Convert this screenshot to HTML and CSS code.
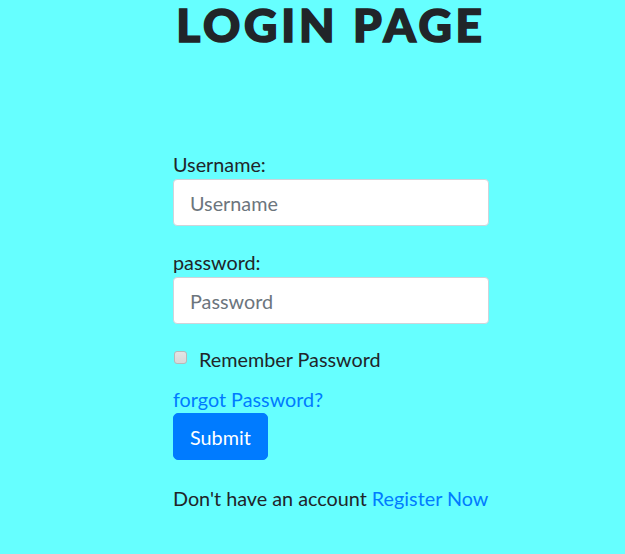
FILE: index.html
```html
<!DOCTYPE html>
<html>
<head>
<meta charset="utf-8">
<link rel="stylesheet" href="styles.css">
</head>
<body>
<div class="page">
  <h1 class="title">LOGIN PAGE</h1>
  <form class="login">
    <div class="group">
      <label class="label">Username:</label>
      <input class="field" type="text" placeholder="Username">
    </div>
    <div class="group">
      <label class="label">password:</label>
      <input class="field" type="password" placeholder="Password">
    </div>
    <div class="check">
      <input type="checkbox" class="box">
      <span>Remember Password</span>
    </div>
    <a class="link forgot" href="#">forgot Password?</a>
    <button class="submit" type="button">Submit</button>
    <p class="register">Don't have an account <a class="link" href="#">Register Now</a></p>
  </form>
</div>
</body>
</html>
```
FILE: styles.css
```css
html, body { margin: 0; padding: 0; }
body {
  background: #66ffff;
  font-family: Lato, "Open Sans", sans-serif;
  font-size: 19.8px;
  color: #212529;
  line-height: 30px;
}
.page {
  display: flex;
  flex-direction: column;
  align-items: center;
  padding-left: 37px;
}
.title {
  margin: 0;
  padding: 0 4px;
  font-size: 46px;
  font-weight: 900;
  line-height: 50px;
  letter-spacing: 3.8px;
  -webkit-text-stroke: 1.6px #212529;
  white-space: nowrap;
}
.login {
  width: 316px;
  margin-top: 99px;
  display: flex;
  flex-direction: column;
  align-items: flex-start;
}
.group { width: 100%; margin-bottom: 21px; }
.label { display: block; margin-bottom: 0; }
.field {
  display: block;
  box-sizing: border-box;
  width: 100%;
  height: 47px;
  padding: 8px 16px;
  font-family: inherit;
  font-size: 19.8px;
  color: #495057;
  background: #fff;
  border: 1px solid #ced4da;
  border-radius: 4px;
}
.field::placeholder { color: #6c757d; }
.check { display: flex; align-items: center; gap: 12px; margin-top: -1px; }
.box {
  appearance: none;
  -webkit-appearance: none;
  margin: 0 0 4px 1px;
  width: 13px;
  height: 13px;
  box-sizing: border-box;
  border: 1px solid #b8b8b8;
  border-radius: 3px;
  background: linear-gradient(#e4e4e4, #d8d8d8);
}
.link { color: #007bff; text-decoration: none; }
.forgot { margin-top: 10px; }
.submit {
  margin-top: -1px;
  height: 47px;
  background: #007bff;
  color: #fff;
  border: 1px solid #007bff;
  border-radius: 5px;
  font-family: inherit;
  font-size: 19.8px;
  padding: 0 16px;
  line-height: 30px;
}
.register { margin: 23px 0 0; white-space: nowrap; }
```
